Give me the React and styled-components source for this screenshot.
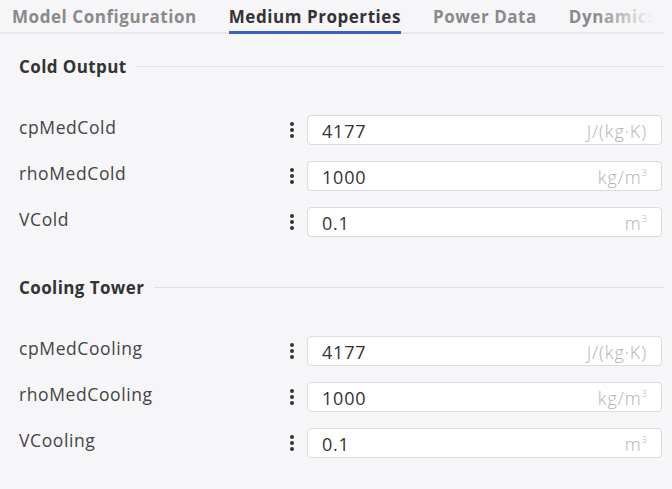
import styled, { createGlobalStyle } from 'styled-components'

const GlobalStyle = createGlobalStyle`
  html, body {
    margin: 0;
    padding: 0;
    background: #f6f6f8;
    font-family: 'Open Sans', 'Noto Sans', sans-serif;
  }
`

const tabs = ['Model Configuration', 'Medium Properties', 'Power Data', 'Dynamics']

const groups = [
  {
    title: 'Cold Output',
    rows: [
      { name: 'cpMedCold', value: '4177', unit: 'J/(kg·K)' },
      { name: 'rhoMedCold', value: '1000', unit: 'kg/m', sup: '3' },
      { name: 'VCold', value: '0.1', unit: 'm', sup: '3' },
    ],
  },
  {
    title: 'Cooling Tower',
    rows: [
      { name: 'cpMedCooling', value: '4177', unit: 'J/(kg·K)' },
      { name: 'rhoMedCooling', value: '1000', unit: 'kg/m', sup: '3' },
      { name: 'VCooling', value: '0.1', unit: 'm', sup: '3' },
    ],
  },
]

const App = () => {
  return (
    <>
      <GlobalStyle />
      <Page>
        <TabBar>
          {tabs.map((t, i) => (
            <Tab key={t} active={i === 1}>{t}</Tab>
          ))}
          <Fade />
        </TabBar>
        {groups.map((g) => (
          <Group key={g.title}>
            <GroupHead>
              <GroupTitle>{g.title}</GroupTitle>
              <Rule />
            </GroupHead>
            <Rows>
              {g.rows.map((r) => (
                <Row key={r.name}>
                  <Label>{r.name}</Label>
                  <Kebab>
                    <Dot />
                    <Dot />
                    <Dot />
                  </Kebab>
                  <Field>
                    <Value>{r.value}</Value>
                    <Unit>
                      {r.unit}
                      {r.sup && <sup>{r.sup}</sup>}
                    </Unit>
                  </Field>
                </Row>
              ))}
            </Rows>
          </Group>
        ))}
      </Page>
    </>
  )
}

export default App

const Page = styled.div`
  width: 672px;
  height: 489px;
  overflow: hidden;
  box-sizing: border-box;
`

const TabBar = styled.div`
  position: relative;
  display: flex;
  gap: 32px;
  width: 664px;
  height: 34px;
  padding-left: 12px;
  box-sizing: border-box;
  box-shadow: inset 0 -2px 0 #e8e8eb;
  overflow: hidden;
  white-space: nowrap;
`

const Tab = styled.div`
  font-size: 17px;
  font-weight: 700;
  letter-spacing: 0.55px;
  line-height: 34px;
  color: ${(p) => (p.active ? '#333' : '#8a8a8a')};
  box-shadow: ${(p) => (p.active ? 'inset 0 -3px 0 #3e5fc4' : 'none')};
  height: 34px;
  box-sizing: border-box;
  flex-shrink: 0;
`

const Fade = styled.div`
  position: absolute;
  right: 0;
  top: 0;
  width: 70px;
  height: 32px;
  background: linear-gradient(to right, rgba(246, 246, 248, 0), #f6f6f8 85%);
`

const Group = styled.section`
  padding: 0 8px 0 19px;
  & + & {
    margin-top: 35px;
  }
`

const GroupHead = styled.div`
  display: flex;
  align-items: center;
  gap: 10px;
  height: 30px;
  margin-top: 17px;
`

const GroupTitle = styled.h3`
  margin: 0;
  font-size: 17px;
  font-weight: 700;
  letter-spacing: 0.4px;
  color: #333;
`

const Rule = styled.div`
  flex: 1;
  height: 1px;
  background: #e2e2e6;
`

const Rows = styled.div`
  display: flex;
  flex-direction: column;
  gap: 16px;
  margin-top: 34px;
`

const Row = styled.div`
  display: grid;
  grid-template-columns: 1fr 18px 355px;
  align-items: center;
  height: 30px;
  padding-right: 2px;
`

const Label = styled.span`
  font-size: 17.5px;
  letter-spacing: 0.6px;
  color: #444;
  margin-top: -6px;
`

const Kebab = styled.div`
  display: flex;
  flex-direction: column;
  gap: 2px;
  align-items: center;
  margin-left: -12px;
`

const Dot = styled.span`
  width: 4px;
  height: 4px;
  border-radius: 50%;
  background: #333;
`

const Field = styled.div`
  display: flex;
  align-items: center;
  justify-content: space-between;
  height: 30px;
  box-sizing: border-box;
  background: #fff;
  border: 1px solid #dcdcdf;
  border-radius: 4px;
  padding: 2px 14px 0 14px;
`

const Value = styled.span`
  font-size: 18px;
  letter-spacing: 0.8px;
  color: #333;
`

const Unit = styled.span`
  font-size: 18px;
  font-weight: 300;
  letter-spacing: 0.9px;
  color: #b3b3b3;
  sup {
    font-size: 9.5px;
    vertical-align: 8px;
    letter-spacing: 0;
  }
`
